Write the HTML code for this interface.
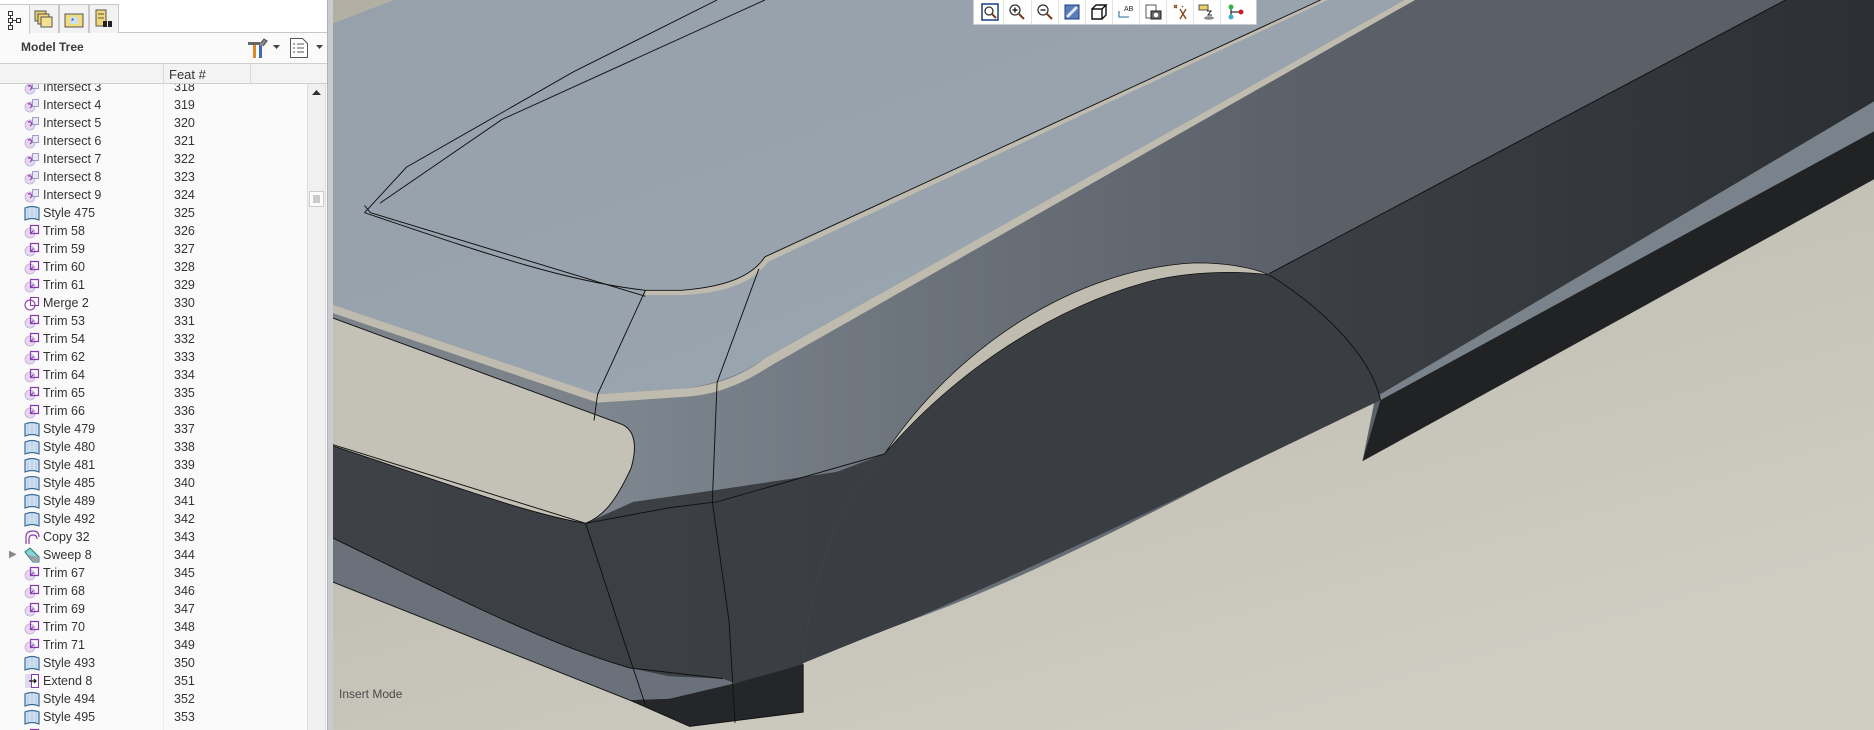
<!DOCTYPE html>
<html><head><meta charset="utf-8"><style>
*{margin:0;padding:0;box-sizing:border-box}
body{width:1874px;height:730px;overflow:hidden;position:relative;background:#c4c2b6;font-family:"Liberation Sans",Arial,sans-serif}
#vp{position:absolute;left:0;top:0;width:1874px;height:730px}
#panel{position:absolute;left:0;top:0;width:327px;height:730px;background:#fafafa;overflow:hidden}
#sep{position:absolute;left:327px;top:0;width:6px;height:730px;background:#c9cbce;border-left:1px solid #b0b2b5}
.tabs{position:absolute;left:0;top:0;width:327px;height:33px;background:#fff;border-bottom:1px solid #c8c8c8}
.tab{position:absolute;top:4px;height:29px;width:30px;border:1px solid #c8c8c8;border-bottom:none;background:#f2f2f2}
.tab.act{background:#fafafa;height:30px}
.mt{position:absolute;left:21px;top:40px;font-size:12px;font-weight:bold;color:#3a3a3a}
.hdr{position:absolute;left:0;top:63px;width:327px;height:21px;background:#f3f3f3;border-top:1px solid #cfcfcf;border-bottom:1px solid #cfcfcf}
.hdr span{position:absolute;left:169px;top:3px;font-size:13px;color:#333}
.vd{position:absolute;top:0;width:1px;height:20px;background:#d8d8d8}
#list{position:absolute;left:0;top:84px;width:307px;height:646px;overflow:hidden}
.r{position:absolute;left:0;height:18px;width:300px;font-size:12.5px;color:#333;line-height:18px}
.r .t{position:absolute;left:43px;top:0}
.r .n{position:absolute;left:174px;top:0}
.r svg{position:absolute;left:24px;top:1px}
.coldiv{position:absolute;left:163px;top:84px;width:1px;height:646px;background:#ececec}
.sb{position:absolute;left:307px;top:84px;width:19px;height:646px;background:#f0f0f0;border-left:1px solid #ddd;border-right:1px solid #ddd}
.tb{position:absolute;left:973px;top:0;width:284px;height:25px;background:#fff;border:1px solid #c8ccd0;border-top:none}
.tb i{position:absolute;top:0;width:1px;height:24px;background:#e3e3e3}
.tb svg{position:absolute;top:3px}
.im{position:absolute;left:339px;top:687px;font-size:12px;color:#4a4a4a}
</style></head><body>
<svg id="vp" viewBox="0 0 1568 611" preserveAspectRatio="none">
<defs>
<linearGradient id="body" x1="500" y1="0" x2="1100" y2="0" gradientUnits="userSpaceOnUse">
<stop offset="0" stop-color="#7e868f"/><stop offset="0.5" stop-color="#6a7179"/><stop offset="1" stop-color="#5a5f68"/></linearGradient>
<linearGradient id="dk" x1="1060" y1="0" x2="1568" y2="0" gradientUnits="userSpaceOnUse"><stop offset="0" stop-color="#3d4146"/><stop offset="1" stop-color="#2c2f33"/></linearGradient>
<linearGradient id="low" x1="0" y1="0" x2="1" y2="0"><stop offset="0" stop-color="#3e4247"/><stop offset="1" stop-color="#3a3e43"/></linearGradient>
<linearGradient id="hood" x1="0" y1="0" x2="1" y2="1"><stop offset="0" stop-color="#96a1ab"/><stop offset="1" stop-color="#9aa5af"/></linearGradient>
<linearGradient id="gr" x1="0" y1="0" x2="0.6" y2="1"><stop offset="0" stop-color="#b2afa2"/><stop offset="1" stop-color="#cfcdc2"/></linearGradient>
</defs>
<rect x="278" y="0" width="1290" height="611" fill="url(#gr)"/>
<!-- car body -->
<path d="M278 20 L330 0 L1568 0 L1568 150 L1140 386 L1150 336 C1050 380 900 470 760 520 C720 535 690 548 672 555 L672 596 L577 608 L527 586 L278 487 Z" fill="url(#body)"/>
<!-- dark upper side -->
<path d="M1062 229 L1494 0 L1568 0 L1568 85 L1155 330 Z" fill="url(#dk)"/>
<path d="M1155 330 L1568 85 L1568 110 L1155 335 Z" fill="#7a838b"/>
<path d="M1155 335 L1568 110 L1568 150 L1140 386 Z" fill="#202224"/>
<!-- lower front dark -->
<path d="M278 372 L490 438 L530 420 L600 410 L700 395 L740 380 C700 420 680 480 672 555 L672 596 L577 608 L527 586 L278 487 Z" fill="url(#low)"/>
<path d="M278 450 C380 500 460 540 527 559 L560 566 L605 568 L615 572 L560 585 L527 586 L278 487 Z" fill="#6a717a"/>
<path d="M527 586 L577 608 L672 596 L672 556 L615 572 L560 585 Z" fill="#242629"/>
<!-- hood -->
<path d="M278 20 L330 0 L1175 0 L640 300 C615 318 590 322 575 325 L500 330 L278 255 Z" fill="url(#hood)"/>
<path d="M278 255 L500 330 L575 325 C600 322 620 315 640 300 L1175 0 L1184 0 L645 306 C620 322 600 330 575 332 L500 337 L278 262 Z" fill="#bfbcaf"/>
<path d="M278 262 L500 337 L497 352 L278 270Z" fill="#7b828a"/>
<path d="M540 243 L570 243 C610 240 630 230 640 215 L1105 0 L1111 0 L643 219 C630 236 610 245 570 247 L540 247Z" fill="#bfbcaf"/>
<!-- cutout -->
<path d="M278 266 L520 355 C532 360 533 375 528 392 C515 420 505 432 490 438 C440 430 360 400 278 373 Z" fill="#c4c2b6" stroke="#111" stroke-width="0.8"/>
<!-- wheel arch -->
<path d="M740 380 C800 290 900 225 1000 220 C1030 220 1050 225 1062 230 C1110 260 1148 300 1155 335 C1050 385 900 460 760 520 C720 535 690 548 672 555 C680 480 700 420 740 380 Z" fill="#3a3d42"/>
<path d="M740 380 C800 290 900 225 1000 220 C1030 220 1050 225 1062 230 C1030 226 990 228 960 236 C880 258 800 310 740 380 Z" fill="#c0bdb0" stroke="#111" stroke-width="0.6"/>
<g fill="none" stroke="#111" stroke-width="0.8">
<path d="M305 178 C400 210 470 235 540 243 L570 243 C610 240 630 230 640 215 L1105 0"/>
<path d="M305 172 L310 178 L540 248"/>
<path d="M305 178 L340 140 L480 60 L600 0"/>
<path d="M318 170 L420 100 L640 0"/>
<path d="M540 243 L500 330 L497 352"/>
<path d="M635 225 L600 320 L596 420 L610 520 L615 605"/>
<path d="M490 438 L520 530 L540 590"/>
<path d="M490 438 L560 425 L600 420 L740 380"/>
<path d="M1062 230 C1110 260 1148 300 1155 335"/>
<path d="M1062 229 L1494 0"/>
<path d="M278 372 L490 438"/>
<path d="M278 450 C380 500 460 540 527 559 L605 568"/>
<path d="M278 487 L527 586 L577 608 L672 596 L672 556"/>
</g>
</svg>

<div class="tb">
<svg style="left:7px" width="18" height="18" viewBox="0 0 18 18"><rect x="1" y="1" width="16" height="16" fill="none" stroke="#1a3d8a" stroke-width="1.5"/><circle cx="8" cy="8" r="4" fill="#fff" stroke="#333" stroke-width="1.3"/><path d="M11 11l4 4" stroke="#7a3b1a" stroke-width="2"/></svg>
<i style="left:29px"></i>
<svg style="left:34px" width="18" height="18" viewBox="0 0 18 18"><circle cx="7" cy="7" r="5" fill="#fff" stroke="#333" stroke-width="1.3"/><path d="M4.5 7h5M7 4.5v5" stroke="#222" stroke-width="1.4"/><path d="M11 11l5 5" stroke="#7a3b1a" stroke-width="2"/></svg>
<i style="left:57px"></i>
<svg style="left:62px" width="18" height="18" viewBox="0 0 18 18"><circle cx="7" cy="7" r="5" fill="#fff" stroke="#333" stroke-width="1.3"/><path d="M4.5 7h5" stroke="#222" stroke-width="1.4"/><path d="M11 11l5 5" stroke="#7a3b1a" stroke-width="2"/></svg>
<i style="left:84px"></i>
<svg style="left:89px" width="18" height="18" viewBox="0 0 18 18"><rect x="2" y="2" width="14" height="14" fill="#5a7fb8" stroke="#1a3d8a"/><path d="M4 14L14 4" stroke="#dde6f2" stroke-width="3"/></svg>
<i style="left:111px"></i>
<svg style="left:116px" width="18" height="18" viewBox="0 0 18 18"><path d="M2 6h10v10H2z M2 6l4-4h10l-4 4 M16 2v10l-4 4" fill="#fff" stroke="#111" stroke-width="1.4"/></svg>
<i style="left:138px"></i>
<svg style="left:143px" width="18" height="18" viewBox="0 0 18 18"><path d="M2 8v6h10" fill="none" stroke="#4a8ab8" stroke-width="1.3"/><text x="7" y="8" font-size="7" font-family="Liberation Sans" fill="#222">AB</text></svg>
<i style="left:165px"></i>
<svg style="left:170px" width="18" height="18" viewBox="0 0 18 18"><rect x="2" y="2" width="10" height="13" fill="#fff" stroke="#555"/><rect x="7" y="8" width="10" height="8" fill="#666" stroke="#222"/><circle cx="12" cy="12" r="2.3" fill="#fff"/></svg>
<i style="left:192px"></i>
<svg style="left:197px" width="18" height="18" viewBox="0 0 18 18"><path d="M3 2l3 3M6 2l-3 3M9 6l6 10M15 6l-6 10M11 3l1 1" stroke="#8a4a1a" stroke-width="1.4"/></svg>
<i style="left:219px"></i>
<svg style="left:224px" width="18" height="18" viewBox="0 0 18 18"><rect x="1" y="2" width="9" height="5" fill="#f0d060" stroke="#555"/><path d="M9 8l4 0-3 4h4" stroke="#222" fill="none"/><ellipse cx="11" cy="15" rx="5" ry="1.8" fill="#8a8a8a"/></svg>
<i style="left:246px"></i>
<svg style="left:252px" width="20" height="18" viewBox="0 0 20 18"><path d="M5 4v10M5 9h10" stroke="#333" stroke-width="1.3"/><circle cx="5" cy="4" r="2.5" fill="#3bb04a"/><circle cx="5" cy="14" r="2.5" fill="#3ab0c8"/><circle cx="15" cy="9" r="2.5" fill="#c8202a"/></svg>
</div>
<div class="im">Insert Mode</div>

<div id="panel">
<div class="tabs">
<div class="tab act" style="left:0;border-left:none"><svg width="28" height="28" viewBox="0 0 28 28"><g fill="none" stroke="#333" stroke-width="1"><rect x="8.5" y="6.5" width="4" height="4"/><rect x="8.5" y="13.5" width="4" height="4"/><rect x="8.5" y="20.5" width="4" height="4"/><rect x="16.5" y="13.5" width="4" height="4"/><path d="M10.5 10.5v3M10.5 17.5v3M12.5 15.5h4"/></g></svg></div>
<div class="tab" style="left:29px"><svg width="28" height="28" viewBox="0 0 28 28"><rect x="5" y="6" width="11" height="10" fill="#e8d070" stroke="#555"/><rect x="8" y="9" width="11" height="10" fill="#f0d878" stroke="#555"/><rect x="11" y="12" width="11" height="10" fill="#f5e090" stroke="#555"/></svg></div>
<div class="tab" style="left:59px"><svg width="28" height="28" viewBox="0 0 28 28"><rect x="5" y="9" width="18" height="13" fill="#f2dc80" stroke="#555"/><rect x="10" y="12" width="8" height="7" fill="#cde" /><text x="11" y="19" font-size="8" fill="#1a4aa0" font-family="Liberation Sans">*</text></svg></div>
<div class="tab" style="left:89px"><svg width="28" height="28" viewBox="0 0 28 28"><rect x="6" y="5" width="10" height="16" fill="#f0d878" stroke="#555"/><path d="M8 9h6M8 13h6" stroke="#555"/><rect x="13" y="16" width="4" height="6" fill="#222"/><rect x="18" y="16" width="4" height="6" fill="#222"/></svg></div>
</div>
<div class="mt">Model Tree</div>
<svg style="position:absolute;left:247px;top:37px" width="22" height="22" viewBox="0 0 22 22"><rect x="1" y="5" width="12" height="3" fill="#666"/><rect x="6" y="8" width="3" height="13" fill="#e0862a"/><rect x="12" y="8" width="3" height="13" fill="#3a6ab8"/><path d="M13 7l4-5 3 2-4 5" fill="#888" stroke="#444"/></svg>
<svg style="position:absolute;left:273px;top:44px" width="8" height="6"><path d="M0 1h7L3.5 5z" fill="#444"/></svg>
<svg style="position:absolute;left:289px;top:37px" width="20" height="22" viewBox="0 0 20 22"><path d="M1.5 1.5h12l5 5v14h-17z" fill="#fff" stroke="#555"/><path d="M4 7h2M8 7h7M4 11h2M8 11h7M4 15h2M8 15h7" stroke="#555"/></svg>
<svg style="position:absolute;left:316px;top:44px" width="8" height="6"><path d="M0 1h7L3.5 5z" fill="#444"/></svg>
<div class="hdr"><div class="vd" style="left:163px"></div><div class="vd" style="left:250px"></div><span>Feat #</span></div>
<div class="coldiv"></div>
<svg width="0" height="0" style="position:absolute"><defs>
<symbol id="sty" viewBox="0 0 16 16"><path d="M1 3 Q8 0 15 3 L15 15 Q8 12 1 15 Z" fill="#cfe0f2" stroke="#3a6a9a" stroke-width="1.2"/><path d="M4 4v9M8 3v9M12 4v9" stroke="#a8c4e0" stroke-width="0.8"/></symbol>
<symbol id="trm" viewBox="0 0 16 16"><circle cx="6" cy="10" r="5" fill="#e3d8ec" stroke="#c8a8dc" stroke-width="0.8"/><path d="M6.5 10.5V2.5h8v8z M6.5 10.5l3-3" fill="none" stroke="#8a3ab0" stroke-width="1.2"/></symbol>
<symbol id="int" viewBox="0 0 16 16"><circle cx="6" cy="10" r="5" fill="#e3d8ec" stroke="#c8a8dc" stroke-width="0.8"/><path d="M4 7 Q7 6 8 9 L6 11" fill="none" stroke="#8a3ab0" stroke-width="1.2"/><rect x="8.5" y="2.5" width="6" height="7" fill="#e8e8f4" stroke="#8a8ac0" stroke-width="0.8"/></symbol>
<symbol id="mrg" viewBox="0 0 16 16"><circle cx="6" cy="10" r="5" fill="#fff" stroke="#8a3ab0" stroke-width="1.1"/><path d="M6.5 10.5V2.5h8v8z" fill="none" stroke="#8a3ab0" stroke-width="1.1"/></symbol>
<symbol id="cpy" viewBox="0 0 16 16"><path d="M2 15V8 Q2 2 9 2 Q15 2 15 8" fill="none" stroke="#8a3ab0" stroke-width="1.2"/><path d="M5 15V10 Q5 6 9 6 Q13 6 13 10" fill="none" stroke="#8a3ab0" stroke-width="1.2"/></symbol>
<symbol id="swp" viewBox="0 0 16 16"><path d="M1 5 L6 1 L15 10 L15 15 L9 15 Z" fill="#8ad4d4" stroke="#1a7a7a"/><path d="M4 8 L9 15 L15 15 L15 10Z" fill="#9aa0a6"/></symbol>
<symbol id="ext" viewBox="0 0 16 16"><rect x="1" y="1" width="6" height="14" fill="#dcdce8"/><rect x="7.5" y="1.5" width="7" height="13" fill="#fff" stroke="#8a3ab0"/><path d="M5 8h7M10 6l2 2-2 2" stroke="#111" fill="none" stroke-width="1.2"/></symbol>
</defs></svg>
<div id="list">
<div class="r" style="top:-6px"><svg width="16" height="16"><use href="#int"/></svg><span class="t">Intersect 3</span><span class="n">318</span></div>
<div class="r" style="top:12px"><svg width="16" height="16"><use href="#int"/></svg><span class="t">Intersect 4</span><span class="n">319</span></div>
<div class="r" style="top:30px"><svg width="16" height="16"><use href="#int"/></svg><span class="t">Intersect 5</span><span class="n">320</span></div>
<div class="r" style="top:48px"><svg width="16" height="16"><use href="#int"/></svg><span class="t">Intersect 6</span><span class="n">321</span></div>
<div class="r" style="top:66px"><svg width="16" height="16"><use href="#int"/></svg><span class="t">Intersect 7</span><span class="n">322</span></div>
<div class="r" style="top:84px"><svg width="16" height="16"><use href="#int"/></svg><span class="t">Intersect 8</span><span class="n">323</span></div>
<div class="r" style="top:102px"><svg width="16" height="16"><use href="#int"/></svg><span class="t">Intersect 9</span><span class="n">324</span></div>
<div class="r" style="top:120px"><svg width="16" height="16"><use href="#sty"/></svg><span class="t">Style 475</span><span class="n">325</span></div>
<div class="r" style="top:138px"><svg width="16" height="16"><use href="#trm"/></svg><span class="t">Trim 58</span><span class="n">326</span></div>
<div class="r" style="top:156px"><svg width="16" height="16"><use href="#trm"/></svg><span class="t">Trim 59</span><span class="n">327</span></div>
<div class="r" style="top:174px"><svg width="16" height="16"><use href="#trm"/></svg><span class="t">Trim 60</span><span class="n">328</span></div>
<div class="r" style="top:192px"><svg width="16" height="16"><use href="#trm"/></svg><span class="t">Trim 61</span><span class="n">329</span></div>
<div class="r" style="top:210px"><svg width="16" height="16"><use href="#mrg"/></svg><span class="t">Merge 2</span><span class="n">330</span></div>
<div class="r" style="top:228px"><svg width="16" height="16"><use href="#trm"/></svg><span class="t">Trim 53</span><span class="n">331</span></div>
<div class="r" style="top:246px"><svg width="16" height="16"><use href="#trm"/></svg><span class="t">Trim 54</span><span class="n">332</span></div>
<div class="r" style="top:264px"><svg width="16" height="16"><use href="#trm"/></svg><span class="t">Trim 62</span><span class="n">333</span></div>
<div class="r" style="top:282px"><svg width="16" height="16"><use href="#trm"/></svg><span class="t">Trim 64</span><span class="n">334</span></div>
<div class="r" style="top:300px"><svg width="16" height="16"><use href="#trm"/></svg><span class="t">Trim 65</span><span class="n">335</span></div>
<div class="r" style="top:318px"><svg width="16" height="16"><use href="#trm"/></svg><span class="t">Trim 66</span><span class="n">336</span></div>
<div class="r" style="top:336px"><svg width="16" height="16"><use href="#sty"/></svg><span class="t">Style 479</span><span class="n">337</span></div>
<div class="r" style="top:354px"><svg width="16" height="16"><use href="#sty"/></svg><span class="t">Style 480</span><span class="n">338</span></div>
<div class="r" style="top:372px"><svg width="16" height="16"><use href="#sty"/></svg><span class="t">Style 481</span><span class="n">339</span></div>
<div class="r" style="top:390px"><svg width="16" height="16"><use href="#sty"/></svg><span class="t">Style 485</span><span class="n">340</span></div>
<div class="r" style="top:408px"><svg width="16" height="16"><use href="#sty"/></svg><span class="t">Style 489</span><span class="n">341</span></div>
<div class="r" style="top:426px"><svg width="16" height="16"><use href="#sty"/></svg><span class="t">Style 492</span><span class="n">342</span></div>
<div class="r" style="top:444px"><svg width="16" height="16"><use href="#cpy"/></svg><span class="t">Copy 32</span><span class="n">343</span></div>
<div class="r" style="top:462px"><span style="position:absolute;left:9px;top:0;font-size:10px;color:#888">&#9654;</span><svg width="16" height="16"><use href="#swp"/></svg><span class="t">Sweep 8</span><span class="n">344</span></div>
<div class="r" style="top:480px"><svg width="16" height="16"><use href="#trm"/></svg><span class="t">Trim 67</span><span class="n">345</span></div>
<div class="r" style="top:498px"><svg width="16" height="16"><use href="#trm"/></svg><span class="t">Trim 68</span><span class="n">346</span></div>
<div class="r" style="top:516px"><svg width="16" height="16"><use href="#trm"/></svg><span class="t">Trim 69</span><span class="n">347</span></div>
<div class="r" style="top:534px"><svg width="16" height="16"><use href="#trm"/></svg><span class="t">Trim 70</span><span class="n">348</span></div>
<div class="r" style="top:552px"><svg width="16" height="16"><use href="#trm"/></svg><span class="t">Trim 71</span><span class="n">349</span></div>
<div class="r" style="top:570px"><svg width="16" height="16"><use href="#sty"/></svg><span class="t">Style 493</span><span class="n">350</span></div>
<div class="r" style="top:588px"><svg width="16" height="16"><use href="#ext"/></svg><span class="t">Extend 8</span><span class="n">351</span></div>
<div class="r" style="top:606px"><svg width="16" height="16"><use href="#sty"/></svg><span class="t">Style 494</span><span class="n">352</span></div>
<div class="r" style="top:624px"><svg width="16" height="16"><use href="#sty"/></svg><span class="t">Style 495</span><span class="n">353</span></div>
<div class="r" style="top:642px"><svg width="16" height="16"><use href="#trm"/></svg><span class="t"></span></div>
</div>
<div class="sb">
<div style="position:absolute;left:0;top:0;width:17px;height:17px;background:#f0f0f0"><svg width="17" height="17"><path d="M4 11h9L8.5 6z" fill="#333"/></svg></div>
<div style="position:absolute;left:1px;top:107px;width:15px;height:16px;background:#fafafa;border:1px solid #ccc"><svg width="13" height="14"><path d="M3 4h7M3 6h7M3 8h7M3 10h7" stroke="#999"/></svg></div>
</div>
</div>
<div id="sep"></div>
</body></html>
